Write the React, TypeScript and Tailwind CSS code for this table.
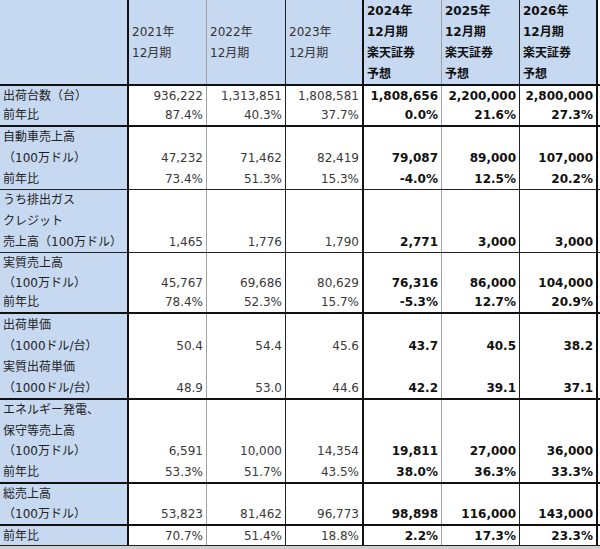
const BLUE = 'bg-[#c6d9f1]';

type Group = {
  h: string;
  labels: string[];
  vals: string[][]; // per column, per line
  bottom: string;
};

// column widths (border included) + right border style
const cols = [
  { w: 'w-[78px]', b: 'border-r border-r-[#a0a0a0]', bold: false },
  { w: 'w-[79px]', b: 'border-r border-r-[#222]', bold: false },
  { w: 'w-[78px]', b: 'border-r-2 border-r-[#111]', bold: false },
  { w: 'w-[78px]', b: 'border-r border-r-[#a0a0a0]', bold: true },
  { w: 'w-[78px]', b: 'border-r border-r-[#222]', bold: true },
  { w: 'w-[78px]', b: 'border-r-2 border-r-[#111]', bold: true },
];

const THICK = 'border-b-2 border-b-[#111]';
const THIN = 'border-b border-b-[#222]';

const groups: Group[] = [
  {
    h: 'h-[41px]',
    labels: ['出荷台数（台）', '前年比'],
    vals: [
      ['936,222', '87.4%'],
      ['1,313,851', '40.3%'],
      ['1,808,581', '37.7%'],
      ['1,808,656', '0.0%'],
      ['2,200,000', '21.6%'],
      ['2,800,000', '27.3%'],
    ],
    bottom: THICK,
  },
  {
    h: 'h-[63px]',
    labels: ['自動車売上高', '（100万ドル）', '前年比'],
    vals: [
      ['', '47,232', '73.4%'],
      ['', '71,462', '51.3%'],
      ['', '82,419', '15.3%'],
      ['', '79,087', '-4.0%'],
      ['', '89,000', '12.5%'],
      ['', '107,000', '20.2%'],
    ],
    bottom: THIN,
  },
  {
    h: 'h-[63px]',
    labels: ['うち排出ガス', 'クレジット', '売上高（100万ドル）'],
    vals: [
      ['', '', '1,465'],
      ['', '', '1,776'],
      ['', '', '1,790'],
      ['', '', '2,771'],
      ['', '', '3,000'],
      ['', '', '3,000'],
    ],
    bottom: THIN,
  },
  {
    h: 'h-[61px]',
    labels: ['実質売上高', '（100万ドル）', '前年比'],
    vals: [
      ['', '45,767', '78.4%'],
      ['', '69,686', '52.3%'],
      ['', '80,629', '15.7%'],
      ['', '76,316', '-5.3%'],
      ['', '86,000', '12.7%'],
      ['', '104,000', '20.9%'],
    ],
    bottom: THICK,
  },
  {
    h: 'h-[86px]',
    labels: ['出荷単価', '（1000ドル/台）', '実質出荷単価', '（1000ドル/台）'],
    vals: [
      ['', '50.4', '', '48.9'],
      ['', '54.4', '', '53.0'],
      ['', '45.6', '', '44.6'],
      ['', '43.7', '', '42.2'],
      ['', '40.5', '', '39.1'],
      ['', '38.2', '', '37.1'],
    ],
    bottom: THICK,
  },
  {
    h: 'h-[84px]',
    labels: ['エネルギー発電、', '保守等売上高', '（100万ドル）', '前年比'],
    vals: [
      ['', '', '6,591', '53.3%'],
      ['', '', '10,000', '51.7%'],
      ['', '', '14,354', '43.5%'],
      ['', '', '19,811', '38.0%'],
      ['', '', '27,000', '36.3%'],
      ['', '', '36,000', '33.3%'],
    ],
    bottom: THICK,
  },
  {
    h: 'h-[42px]',
    labels: ['総売上高', '（100万ドル）'],
    vals: [
      ['', '53,823'],
      ['', '81,462'],
      ['', '96,773'],
      ['', '98,898'],
      ['', '116,000'],
      ['', '143,000'],
    ],
    bottom: THICK,
  },
  {
    h: 'h-[20px]',
    labels: ['前年比'],
    vals: [['70.7%'], ['51.4%'], ['18.8%'], ['2.2%'], ['17.3%'], ['23.3%']],
    bottom: 'border-b border-b-[#222]',
  },
];

const headers = [
  ['', '2021年', '12月期', ''],
  ['', '2022年', '12月期', ''],
  ['', '2023年', '12月期', ''],
  ['2024年', '12月期', '楽天証券', '予想'],
  ['2025年', '12月期', '楽天証券', '予想'],
  ['2026年', '12月期', '楽天証券', '予想'],
];

function Lines({ items, className }: { items: string[]; className: string }) {
  return (
    <div className="flex flex-col h-full">
      {items.map((t, i) => (
        <div key={i} className={`flex-1 flex items-center whitespace-nowrap leading-none ${className}`}>
          {t}
        </div>
      ))}
    </div>
  );
}

export default function App() {
  return (
    <div
      className="w-[600px] h-[549px] bg-white text-[12px] overflow-hidden"
      style={{ fontFamily: '"DejaVu Sans", "Noto Sans CJK JP", sans-serif' }}
    >
      {/* header */}
      <div className={`flex h-[86px] ${THICK}`}>
        <div className={`w-[129px] shrink-0 ${BLUE} border-r-2 border-r-[#111]`} />
        {cols.map((c, i) => (
          <div key={i} className={`${c.w} shrink-0 ${c.b} ${BLUE} px-[3px]`}>
            <Lines
              items={headers[i]}
              className={c.bold ? 'font-bold text-[#111]' : 'text-[#333]'}
            />
          </div>
        ))}
      </div>

      {groups.map((g, gi) => (
        <div key={gi} className={`flex ${g.h} ${g.bottom}`}>
          <div className={`w-[129px] shrink-0 ${BLUE} border-r-2 border-r-[#111] px-[3px]`}>
            <Lines items={g.labels} className="text-[#222]" />
          </div>
          {cols.map((c, i) => (
            <div key={i} className={`${c.w} shrink-0 ${c.b} bg-white pr-[3px]`}>
              <Lines
                items={g.vals[i]}
                className={`justify-end ${c.bold ? 'font-bold text-[#111]' : 'text-[#3a3a3a]'}`}
              />
            </div>
          ))}
        </div>
      ))}
      <div className="h-[3px] bg-[#cfcfcf]" />
    </div>
  );
}
